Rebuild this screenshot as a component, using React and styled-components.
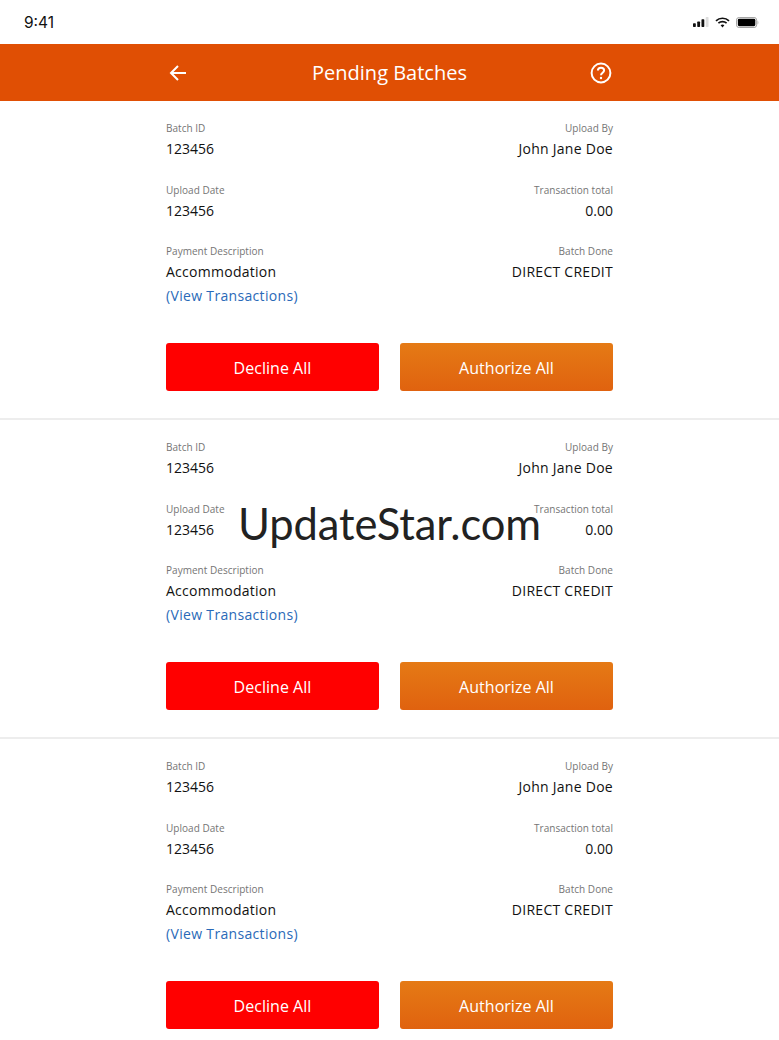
import React from "react";
import styled, { createGlobalStyle } from "styled-components";

const GlobalStyle = createGlobalStyle`
  html, body {
    margin: 0;
    padding: 0;
    background: #fff;
    font-family: "Open Sans", "Liberation Sans", sans-serif;
  }
`;

const batches = [1, 2, 3];

const rows = [
  { left: ["Batch ID", "123456"], right: ["Upload By", "John Jane Doe"] },
  { left: ["Upload Date", "123456"], right: ["Transaction total", "0.00"] },
  { left: ["Payment Description", "Accommodation"], right: ["Batch Done", "DIRECT CREDIT"] },
];

const isNumber = (text) => /^[\d.]+$/.test(text);

function App() {
  return (
    <Page>
      <GlobalStyle />
      <StatusBar>
        <Clock>9:41</Clock>
        <StatusIcons>
          <svg width="16" height="10" viewBox="0 0 17 11" preserveAspectRatio="none">
            <rect x="0" y="7" width="3" height="4" rx="0.7" fill="#111" />
            <rect x="4.5" y="5" width="3" height="6" rx="0.7" fill="#111" />
            <rect x="9" y="2.5" width="3" height="8.5" rx="0.7" fill="#111" />
            <rect x="13.5" y="0" width="3" height="11" rx="0.7" fill="#ddd" />
          </svg>
          <svg width="15" height="11" viewBox="0 0 15 11">
            <path d="M1 3.8 C4.6 0.4 10.4 0.4 14 3.8" fill="none" stroke="#111" strokeWidth="1.7" />
            <path d="M3.4 6.1 C5.7 4 9.3 4 11.6 6.1" fill="none" stroke="#111" strokeWidth="1.7" />
            <path d="M5.6 8.2 L7.5 10.6 L9.4 8.2 C8.3 7.2 6.7 7.2 5.6 8.2 Z" fill="#111" />
          </svg>
          <svg width="23" height="11" viewBox="0 0 25 12" preserveAspectRatio="none">
            <rect x="0.5" y="0.5" width="22" height="11" rx="3" fill="none" stroke="#999" />
            <rect x="2" y="2" width="19" height="8" rx="1.6" fill="#000" />
            <path d="M23.6 4 C24.5 4.4 24.5 7.6 23.6 8 Z" fill="#999" />
          </svg>
        </StatusIcons>
      </StatusBar>
      <Header>
        <HeaderInner>
          <IconSlot>
            <svg width="20" height="20" viewBox="0 0 20 20" fill="none" stroke="#fff" strokeWidth="2">
              <path d="M18 10 H3" />
              <path d="M10 3 L3 10 L10 17" />
            </svg>
          </IconSlot>
          <Title>Pending Batches</Title>
          <IconSlot $end>
            <svg width="22" height="22" viewBox="0 0 22 22" fill="none" stroke="#fff" strokeWidth="2">
              <circle cx="11" cy="11" r="9.4" />
              <path d="M7.9 8.6 C7.9 6.8 9.3 5.8 11 5.8 C12.8 5.8 14.1 6.9 14.1 8.5 C14.1 10.6 11 10.8 11 13.2" />
              <circle cx="11" cy="16" r="1.2" fill="#fff" stroke="none" />
            </svg>
          </IconSlot>
        </HeaderInner>
      </Header>
      {batches.map((batch) => (
        <Batch key={batch}>
          <BatchInner>
            {rows.map((row) => (
              <Row key={row.left[0]}>
                <Field>
                  <Label>{row.left[0]}</Label>
                  <Value $number={isNumber(row.left[1])}>{row.left[1]}</Value>
                </Field>
                <Field $right>
                  <Label>{row.right[0]}</Label>
                  <Value $number={isNumber(row.right[1])}>{row.right[1]}</Value>
                </Field>
              </Row>
            ))}
            <ViewLink>(View Transactions)</ViewLink>
            <Buttons>
              <ActionButton $kind="decline">Decline All</ActionButton>
              <ActionButton $kind="authorize">Authorize All</ActionButton>
            </Buttons>
          </BatchInner>
        </Batch>
      ))}
      <Watermark>UpdateStar.com</Watermark>
    </Page>
  );
}

const Page = styled.div`
  position: relative;
  width: 779px;
  height: 1040px;
  overflow: hidden;
  background: #fff;
`;

const StatusBar = styled.div`
  height: 44px;
  box-sizing: border-box;
  padding: 0 20px 0 24px;
  display: flex;
  align-items: center;
  justify-content: space-between;
`;

const Clock = styled.div`
  font-family: "Inter", "Liberation Sans", sans-serif;
  font-size: 15.5px;
  font-weight: 400;
  color: #111;
`;

const StatusIcons = styled.div`
  display: flex;
  align-items: center;
  gap: 6px;
`;

const Header = styled.div`
  height: 57px;
  background: #e04f04;
  display: flex;
  justify-content: center;
`;

const HeaderInner = styled.div`
  width: 447px;
  display: flex;
  align-items: center;
  justify-content: space-between;
`;

const IconSlot = styled.div`
  width: 60px;
  box-sizing: border-box;
  padding: ${(props) => (props.$end ? "0 1px 0 0" : "0 0 0 2px")};
  display: flex;
  justify-content: ${(props) => (props.$end ? "flex-end" : "flex-start")};
  svg {
    display: block;
  }
`;

const Title = styled.div`
  font-size: 20px;
  color: #fff;
`;

const Batch = styled.div`
  height: 319px;
  box-sizing: border-box;
  border-bottom: 2px solid #ededed;
  display: flex;
  justify-content: center;
`;

const BatchInner = styled.div`
  width: 447px;
  padding-top: 20px;
`;

const Row = styled.div`
  display: flex;
  justify-content: space-between;
  height: 61.5px;
  &:nth-of-type(3) {
    height: 42px;
  }
`;

const Field = styled.div`
  display: flex;
  flex-direction: column;
  gap: 4px;
  text-align: ${(props) => (props.$right ? "right" : "left")};
`;

const Label = styled.div`
  font-size: 10px;
  line-height: 14px;
  color: #757575;
  letter-spacing: 0.03px;
`;

const Value = styled.div`
  font-size: 14px;
  line-height: 19px;
  color: #111;
  letter-spacing: ${(props) => (props.$number ? "0" : "0.27px")};
`;

const ViewLink = styled.div`
  font-size: 14px;
  line-height: 19px;
  letter-spacing: 0.33px;
  color: #2a6ab8;
`;

const Buttons = styled.div`
  display: grid;
  grid-template-columns: 213px 213px;
  justify-content: space-between;
  margin-top: 38px;
`;

const ActionButton = styled.div`
  height: 48px;
  box-sizing: border-box;
  padding-top: 1px;
  border-radius: 3px;
  display: flex;
  align-items: center;
  justify-content: center;
  font-size: 16px;
  letter-spacing: 0.03px;
  color: #fff;
  background: ${(props) =>
    props.$kind === "decline" ? "#ff0000" : "linear-gradient(#e57a15, #e0620f)"};
`;

const Watermark = styled.div`
  position: absolute;
  left: 0;
  right: 0;
  top: 493px;
  text-align: center;
  font-size: 43.5px;
  line-height: 61px;
  letter-spacing: -0.1px;
  color: #222;
  font-family: "Lato", sans-serif;
`;

export default App;
